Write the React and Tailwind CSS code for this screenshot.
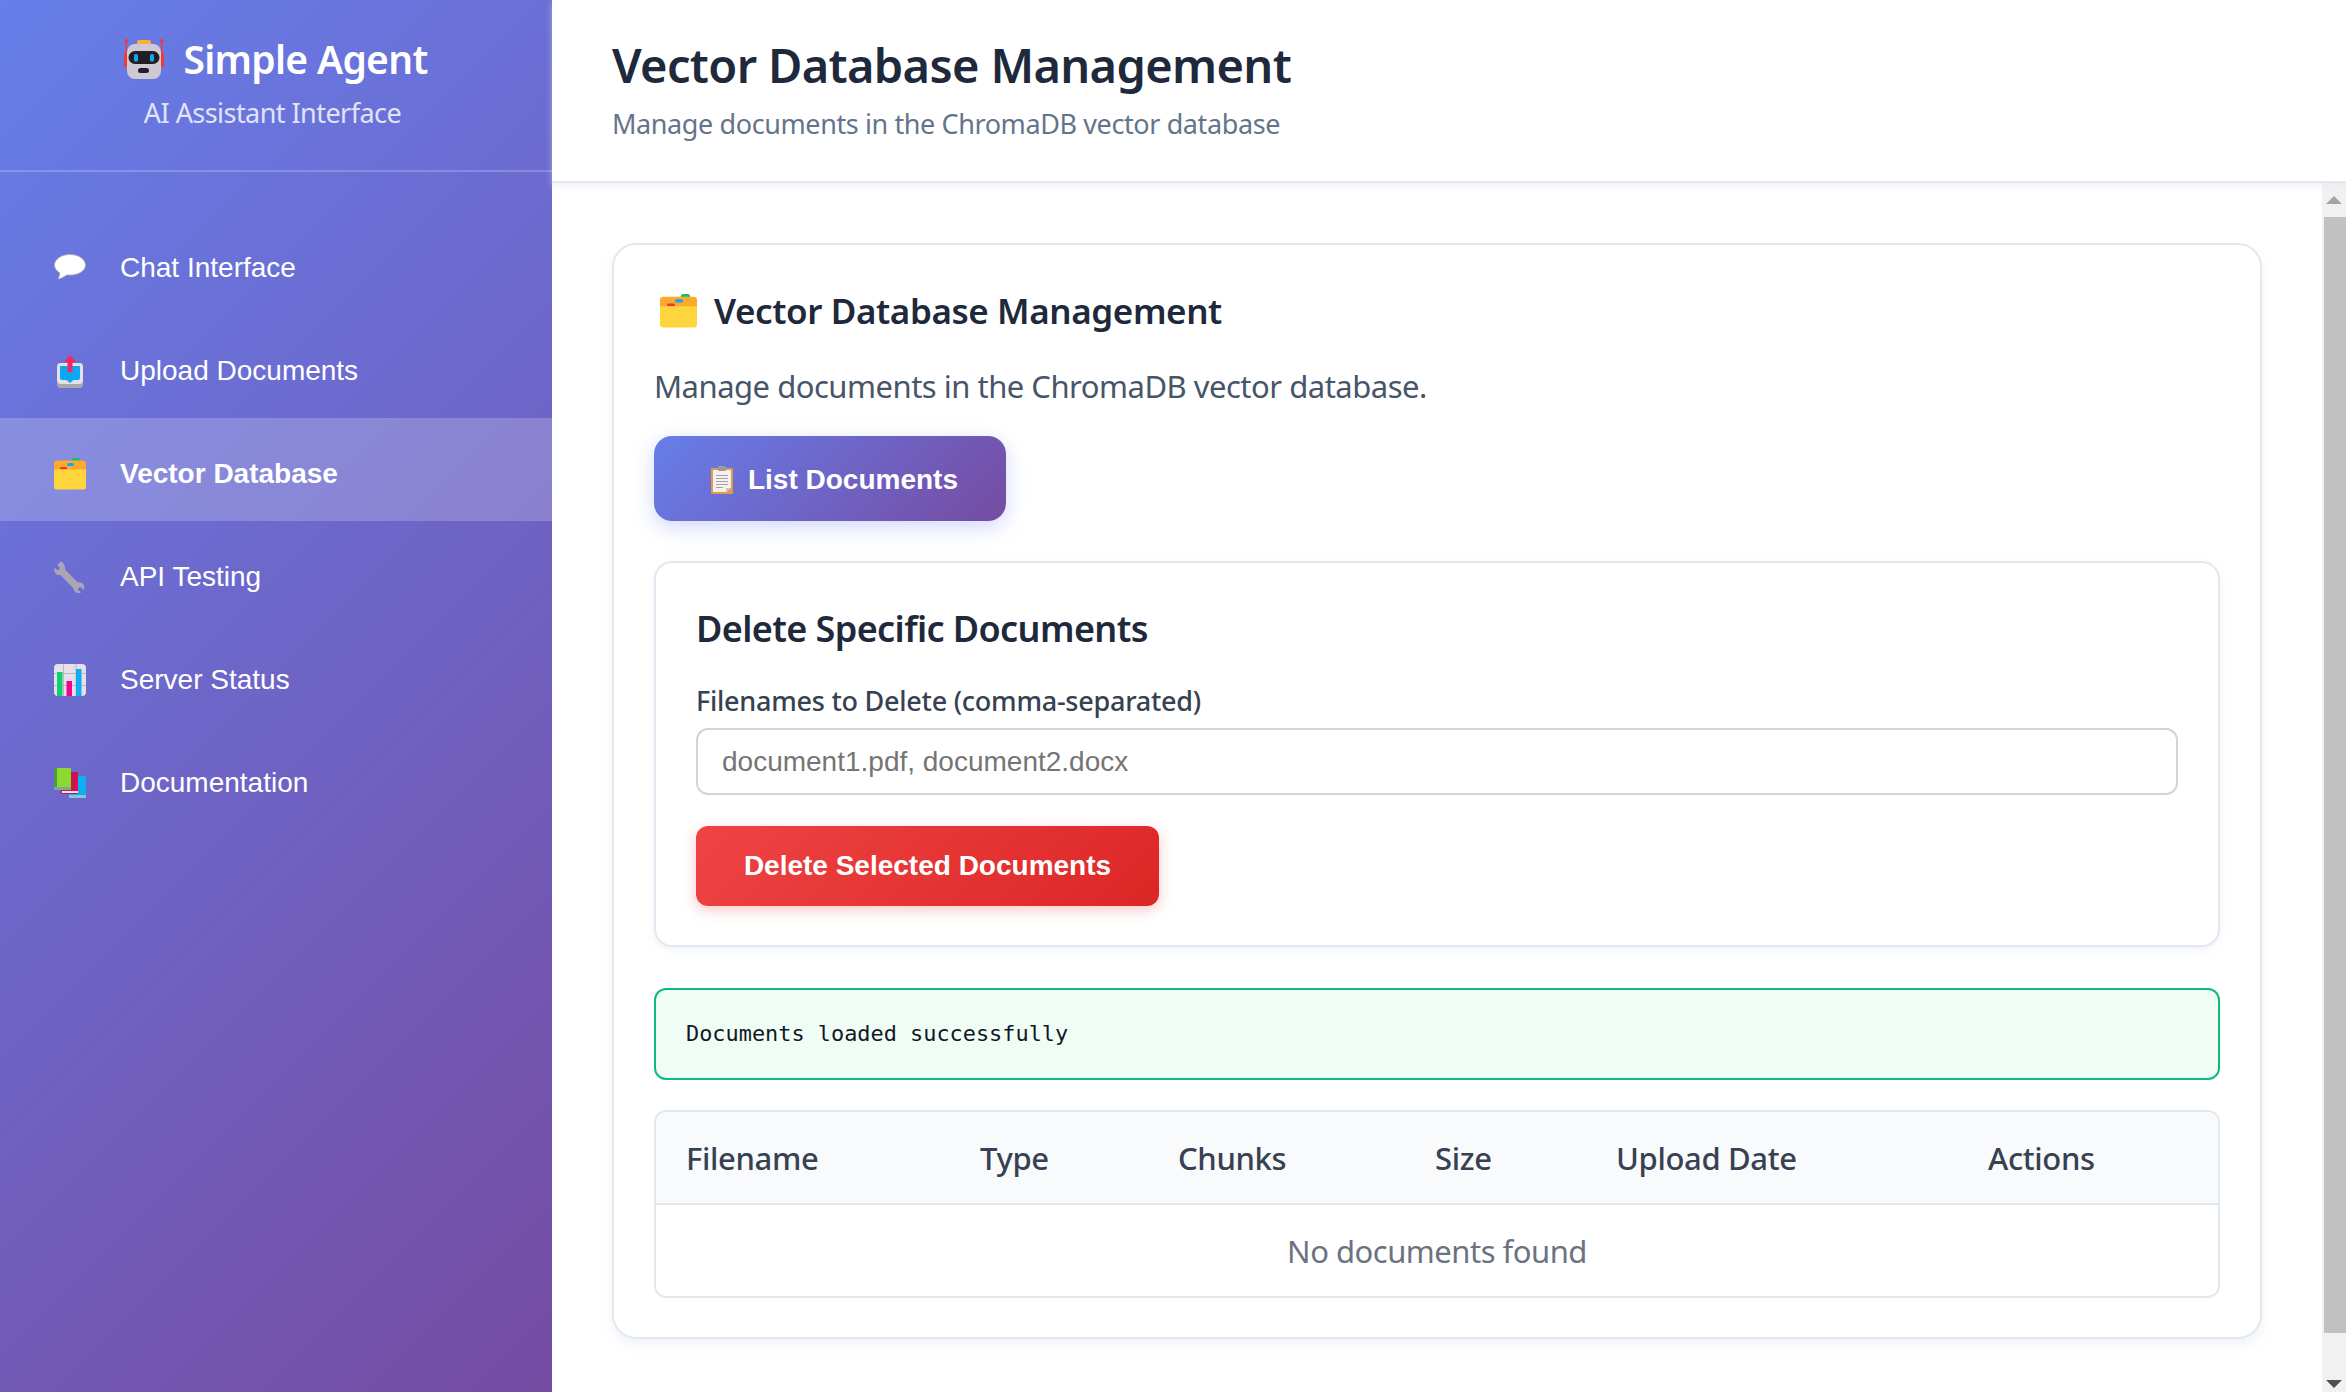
const sans = 'font-["Noto_Sans","Open_Sans",sans-serif]'

function RobotIcon() {
  return (
    <svg width="40" height="40" viewBox="0 0 40 40" className="shrink-0">
      <rect x="0" y="14" width="3" height="14" fill="#f03a3a" />
      <rect x="37" y="14" width="3" height="14" fill="#f03a3a" />
      <rect x="1.6" y="2" width="1.4" height="14" fill="#f03a3a" />
      <rect x="37" y="2" width="1.4" height="14" fill="#f03a3a" />
      <circle cx="2.3" cy="2" r="2" fill="#f03a3a" />
      <circle cx="37.7" cy="2" r="2" fill="#f03a3a" />
      <rect x="13" y="1" width="14" height="5" rx="2" fill="#fbb03b" />
      <rect x="3" y="5" width="34" height="35" rx="8" fill="#cfc9d6" />
      <rect x="4.5" y="12" width="31" height="13" rx="6.5" fill="#1f1f24" />
      <rect x="10" y="15" width="4" height="7.5" rx="1.5" fill="#10a8f0" />
      <rect x="26" y="15" width="4" height="7.5" rx="1.5" fill="#10a8f0" />
      <rect x="14" y="29" width="11" height="5" rx="2.5" fill="#1f1f24" />
    </svg>
  )
}

function ChatIcon() {
  return (
    <svg width="32" height="32" viewBox="0 0 32 32">
      <path d="M16 2.500C7.500 2.500.5 7.300.5 13c0 3.200 2.200 6 5.400 7.900-.2 2.300-1 4.300-1.800 6.100 3.200-.6 6.300-2.500 8.700-4.100 1.100.2 2.300.2 3.200.2 8.500 0 15.500-4.500 15.500-10.100S24.500 2.500 16 2.500z" fill="#fff" stroke="#b4ada0" strokeWidth="0.8" />
    </svg>
  )
}

function UploadIcon() {
  return (
    <svg width="32" height="34" viewBox="0 0 32 34">
      <rect x="3" y="9" width="26" height="25" rx="4" fill="#a9a9ad" />
      <rect x="3" y="9" width="26" height="21" rx="4" fill="#e3e1e6" />
      <path d="M6 12h20v12a2 2 0 0 1-2 2h-4.500l-3.500 3-3.500-3H8a2 2 0 0 1-2-2z" fill="#0ea8f2" />
      <path d="M16 1l6 7h-3.500v10h-5V8H10z" fill="#f7265f" />
    </svg>
  )
}

function FolderIcon({ width = 32, height = 32 }) {
  return (
    <svg width={width} height={height} viewBox="0 0 32 32" preserveAspectRatio="none">
      <rect x="18" y="0" width="8" height="5" rx="2" fill="#12c26a" />
      <rect x="0" y="2.500" width="32" height="20" rx="3" fill="#fba92f" />
      <rect x="13" y="5" width="7" height="3" rx="1.500" fill="#0ea8f2" />
      <rect x="6" y="9" width="7" height="2.500" rx="1.200" fill="#f0382e" />
      <path d="M0 11.500h32V29a2.500 2.500 0 0 1-2.500 2.500h-27A2.500 2.500 0 0 1 0 29z" fill="#ffd53d" />
    </svg>
  )
}

function WrenchIcon() {
  return (
    <svg width="32" height="32" viewBox="0 0 32 32">
      <path d="M7 .3L3.200 4l3 3-2.400 2.400-3-3C-.4 9.800.8 12.800 3.400 13.800c1 .4 2 .4 3 .2L19.200 27c.2 2.600 2.200 4.700 5 5 1 .1 2 0 2.800-.4l-3.300-3.300 2.500-2.500 3.300 3.200c1.500-2.500.6-5.800-2-7.200-1.200-.6-2.400-.7-3.600-.4L11 8.600c.5-3.300-1.200-7-4-8.300z" fill="#aaa6b4" />
    </svg>
  )
}

function ChartIcon() {
  return (
    <svg width="32" height="32" viewBox="0 0 32 32">
      <rect x="0" y="0" width="32" height="32" rx="4" fill="#e6e0ec" />
      <path d="M9.500 0v32M22 0v32M0 9.500h32M0 21.500h32" stroke="#bdb8c4" strokeWidth="1" />
      <rect x="3" y="8" width="5.500" height="24" fill="#0fd06e" />
      <rect x="12.500" y="17" width="5.500" height="15" fill="#f7008c" />
      <rect x="22" y="5" width="5.500" height="27" fill="#0eaef0" />
    </svg>
  )
}

function BooksIcon() {
  return (
    <svg width="32" height="30" viewBox="0 0 32 30">
      <rect x="15" y="8" width="17" height="22" rx="1" fill="#0eaef0" />
      <rect x="15" y="27" width="17" height="3" fill="#8cc1e0" />
      <rect x="7" y="4" width="17" height="22" rx="1" fill="#cc1350" />
      <rect x="8" y="23" width="16" height="2" fill="#f0e4ea" />
      <rect x="0" y="0" width="17" height="21" rx="1" fill="#8bd82f" />
      <rect x="0" y="0" width="3" height="22" fill="#4f9a3c" />
      <rect x="0" y="19" width="17" height="3" fill="#7aa893" />
    </svg>
  )
}

function ClipboardIcon() {
  return (
    <svg width="22" height="28" viewBox="0 0 22 28">
      <rect x="0" y="2" width="22" height="26" rx="1" fill="#e09a4c" />
      <path d="M2 4h18v18l-5 4H2z" fill="#f4f1ee" />
      <path d="M15 26v-4h5z" fill="#c9c3c0" />
      <rect x="7" y="0" width="8" height="5" rx="1" fill="#9d9aa3" />
      <path d="M5 9.500h12M5 12.500h12M5 15.500h12M5 18.500h12M5 21.500h7" stroke="#a4a1aa" strokeWidth="1" />
    </svg>
  )
}

const navItems = [
  { label: 'Chat Interface', icon: <ChatIcon /> },
  { label: 'Upload Documents', icon: <UploadIcon /> },
  { label: 'Vector Database', icon: <FolderIcon />, active: true },
  { label: 'API Testing', icon: <WrenchIcon /> },
  { label: 'Server Status', icon: <ChartIcon /> },
  { label: 'Documentation', icon: <BooksIcon /> },
]

const columns = [
  { label: 'Filename', width: 'w-[294px]' },
  { label: 'Type', width: 'w-[198px]' },
  { label: 'Chunks', width: 'w-[257px]' },
  { label: 'Size', width: 'w-[181px]' },
  { label: 'Upload Date', width: 'w-[372px]' },
  { label: 'Actions', width: 'w-[260px]' },
]

function Sidebar() {
  return (
    <aside className="w-[552px] shrink-0 h-full bg-[linear-gradient(135deg,#667eea_0%,#764ba2_100%)] text-white">
      <div className={`h-[172px] border-b-2 border-white/20 flex flex-col items-center pt-[39px] ${sans}`}>
        <div className="flex items-center gap-[19px] h-[40px]">
          <RobotIcon />
          <span className="text-[39px] font-semibold tracking-[-0.7px]">Simple Agent</span>
        </div>
        <p className="mt-[14px] mr-[7px] text-[27px] leading-[40px] tracking-[-0.55px] text-white/80">AI Assistant Interface</p>
      </div>
      <nav className="pt-[40px] font-['Liberation_Sans',sans-serif] text-[28px]">
        {navItems.map(item => (
          <div
            key={item.label}
            className={`h-[103px] pt-[8px] flex items-center pl-[54px] ${item.active ? 'bg-white/20 font-bold' : ''}`}
          >
            <span className="w-[66px] shrink-0 flex">{item.icon}</span>
            <span>{item.label}</span>
          </div>
        ))}
      </nav>
    </aside>
  )
}

function Scrollbar() {
  return (
    <div className="w-[24px] shrink-0 h-full bg-[#f1f1f1] flex flex-col items-end">
      <div className="h-[34px] w-[24px] flex items-center justify-center">
        <div className="w-0 h-0 border-x-[8px] border-x-transparent border-b-[8px] border-b-[#a3a3a3]" />
      </div>
      <div className="w-[22px] flex-1 bg-[#c1c1c1]" />
      <div className="h-[59px] w-[24px] flex items-end justify-center pb-[4px]">
        <div className="w-0 h-0 border-x-[8px] border-x-transparent border-t-[8px] border-t-[#505050]" />
      </div>
    </div>
  )
}

function App() {
  return (
    <div className={`h-screen w-full flex overflow-hidden bg-white ${sans}`}>
      <Sidebar />
      <div className="flex-1 min-w-0 flex flex-col">
        <header className="h-[183px] shrink-0 px-[60px] pt-[33px] border-b-2 border-[#e2e8f0] shadow-[0_3px_6px_rgba(226,232,240,0.5)] relative bg-white">
          <h1 className="text-[47px] leading-[64px] font-semibold tracking-[-0.65px] text-[#1e293b]">Vector Database Management</h1>
          <p className="mt-[7px] text-[27px] leading-[40px] tracking-[-0.4px] text-[#64748b]">Manage documents in the ChromaDB vector database</p>
        </header>
        <div className="flex-1 min-h-0 flex">
          <main className="flex-1 min-w-0 pt-[60px] pl-[60px] pr-[60px]">
            <section className="rounded-[24px] border-2 border-[#e2e8f0] shadow-[0_6px_10px_rgba(226,232,240,0.5)] px-[40px] pt-[38px] pb-[40px] h-[1096px]">
              <h2 className="flex items-center gap-[17px] h-[56px] text-[35px] font-semibold tracking-[-0.4px] text-[#1e293b]">
                <span className="flex ml-[6px]"><FolderIcon width={37} height={34} /></span>
                Vector Database Management
              </h2>
              <p className="mt-[27px] text-[31px] leading-[40px] tracking-[-0.5px] text-[#475569]">Manage documents in the ChromaDB vector database.</p>
              <button className="mt-[30px] w-[352px] h-[85px] pl-[9px] pt-[3px] rounded-[18px] bg-[linear-gradient(135deg,#667eea_0%,#764ba2_100%)] text-white shadow-[0_6px_20px_rgba(102,126,234,0.3)] flex items-center justify-center gap-[15px] font-['Liberation_Sans',sans-serif] text-[28px] font-bold">
                <ClipboardIcon />
                List Documents
              </button>

              <div className="mt-[40px] h-[386px] rounded-[18px] border-2 border-[#e2e8f0] shadow-[0_3px_6px_rgba(226,232,240,0.5)] px-[40px] pt-[42px]">
                <h3 className="text-[36px] leading-[48px] font-semibold tracking-[-0.6px] text-[#1e293b]">Delete Specific Documents</h3>
                <label className="block mt-[30px] text-[27px] leading-[36px] font-medium tracking-[-0.25px] text-[#374151]">Filenames to Delete (comma-separated)</label>
                <input
                  placeholder="document1.pdf, document2.docx"
                  className="block mt-[9px] w-full h-[67px] px-[24px] rounded-[12px] border-2 border-[#d1d5db] font-['Liberation_Sans',sans-serif] text-[28px] placeholder:text-[#757575]"
                />
                <button className="block mt-[31px] w-[463px] h-[80px] rounded-[12px] bg-[linear-gradient(135deg,#ef4444_0%,#dc2626_100%)] text-white shadow-[0_4px_14px_rgba(239,68,68,0.3)] font-['Liberation_Sans',sans-serif] text-[28px] font-bold">
                  Delete Selected Documents
                </button>
              </div>

              <div className="mt-[41px] h-[92px] rounded-[12px] border-2 border-[#10b981] bg-[#f0fdf4] flex items-center pl-[30px] font-['DejaVu_Sans_Mono',monospace] text-[21.9px] text-[#111827]">
                Documents loaded successfully
              </div>

              <div className="mt-[30px] rounded-[12px] border-2 border-[#e2e8f0] overflow-hidden">
                <table className="w-full table-fixed border-collapse">
                  <thead>
                    <tr className="h-[92px] bg-[#f8fafc] border-b-2 border-[#e2e8f0]">
                      {columns.map(col => (
                        <th key={col.label} className={`${col.width} pl-[30px] pt-[2px] text-left text-[31px] font-medium tracking-[-0.35px] text-[#374151]`}>{col.label}</th>
                      ))}
                    </tr>
                  </thead>
                  <tbody>
                    <tr className="h-[92px]">
                      <td colSpan={6} className="pt-[1px] text-center text-[31px] tracking-[-0.5px] text-[#6b7280]">No documents found</td>
                    </tr>
                  </tbody>
                </table>
              </div>
            </section>
          </main>
          <Scrollbar />
        </div>
      </div>
    </div>
  )
}

export default App
